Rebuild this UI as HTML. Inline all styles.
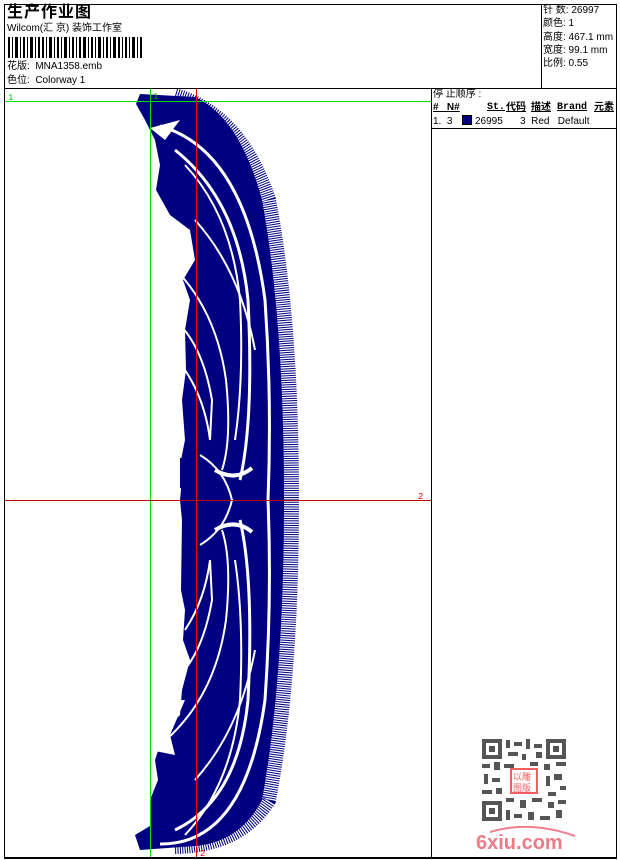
<!DOCTYPE html>
<html><head><meta charset="utf-8"><style>
*{margin:0;padding:0;box-sizing:border-box}
body{width:620px;height:860px;background:#fff;position:relative;overflow:hidden;font-family:"Liberation Sans","Noto Sans CJK SC",sans-serif;color:#000}
.t{position:absolute;font-size:10px;line-height:12px;white-space:nowrap}
.ln{position:absolute;background:#000}
</style></head><body>
<div class="ln" style="left:4px;top:4px;width:613px;height:1px"></div>
<div class="ln" style="left:4px;top:857px;width:613px;height:2px"></div>
<div class="ln" style="left:4px;top:4px;width:1px;height:854px"></div>
<div class="ln" style="left:616px;top:4px;width:1px;height:854px"></div>
<div class="ln" style="left:4px;top:88px;width:613px;height:1px"></div>
<div class="ln" style="left:541px;top:4px;width:1px;height:84px"></div>
<div class="ln" style="left:431px;top:88px;width:1px;height:770px"></div>
<div class="ln" style="left:431px;top:128px;width:186px;height:1px"></div>

<div class="t" style="left:7px;top:3px;font-size:16px;line-height:20px;font-weight:bold;letter-spacing:1px">生产作业图</div>
<div class="t" style="left:7px;top:23px">Wilcom(汇 京) 装饰工作室</div>
<svg style="position:absolute;left:8px;top:37px" width="135" height="21">
<g fill="#000">
<rect x="0" y="0" width="2" height="21"/><rect x="4" y="0" width="1" height="21"/><rect x="7" y="0" width="3" height="21"/><rect x="12" y="0" width="1" height="21"/><rect x="15" y="0" width="2" height="21"/><rect x="19" y="0" width="1" height="21"/><rect x="22" y="0" width="3" height="21"/><rect x="27" y="0" width="1" height="21"/><rect x="30" y="0" width="2" height="21"/><rect x="34" y="0" width="2" height="21"/><rect x="38" y="0" width="1" height="21"/><rect x="41" y="0" width="3" height="21"/><rect x="46" y="0" width="1" height="21"/><rect x="49" y="0" width="2" height="21"/><rect x="53" y="0" width="1" height="21"/><rect x="56" y="0" width="3" height="21"/><rect x="61" y="0" width="1" height="21"/><rect x="64" y="0" width="2" height="21"/><rect x="68" y="0" width="1" height="21"/><rect x="71" y="0" width="2" height="21"/><rect x="75" y="0" width="3" height="21"/><rect x="80" y="0" width="1" height="21"/><rect x="83" y="0" width="2" height="21"/><rect x="87" y="0" width="1" height="21"/><rect x="90" y="0" width="3" height="21"/><rect x="95" y="0" width="1" height="21"/><rect x="98" y="0" width="2" height="21"/><rect x="102" y="0" width="1" height="21"/><rect x="105" y="0" width="3" height="21"/><rect x="110" y="0" width="2" height="21"/><rect x="114" y="0" width="1" height="21"/><rect x="117" y="0" width="2" height="21"/><rect x="121" y="0" width="1" height="21"/><rect x="124" y="0" width="3" height="21"/><rect x="129" y="0" width="1" height="21"/><rect x="132" y="0" width="2" height="21"/>
</g></svg>
<div class="t" style="left:7px;top:61px">花版:&nbsp; MNA1358.emb</div>
<div class="t" style="left:7px;top:75px">色位:&nbsp; Colorway 1</div>

<div class="t" style="left:543px;top:5px">针 数: 26997</div>
<div class="t" style="left:543px;top:18px">颜色: 1</div>
<div class="t" style="left:543px;top:32px">高度: 467.1 mm</div>
<div class="t" style="left:543px;top:45px">宽度: 99.1 mm</div>
<div class="t" style="left:543px;top:58px">比例: 0.55</div>

<div class="t" style="left:433px;top:89px">停 止顺序 :</div>
<div class="t" style="left:433px;top:102px;font-weight:bold;text-decoration:underline">#&nbsp;&nbsp; N#</div>
<div class="t" style="left:487px;top:102px;font-weight:bold;text-decoration:underline;font-family:'Liberation Mono','Noto Sans CJK SC',monospace">St.</div>
<div class="t" style="left:506px;top:102px;font-weight:bold;text-decoration:underline">代码</div>
<div class="t" style="left:531px;top:102px;font-weight:bold;text-decoration:underline">描述</div>
<div class="t" style="left:557px;top:102px;font-weight:bold;text-decoration:underline;font-family:'Liberation Mono',monospace">Brand</div>
<div class="t" style="left:594px;top:102px;font-weight:bold;text-decoration:underline">元素</div>
<div class="t" style="left:433px;top:116px">1.&nbsp; 3</div>
<div style="position:absolute;left:462px;top:115px;width:10px;height:10px;background:#000080;border:1px solid #000"></div>
<div class="t" style="left:475px;top:116px">26995</div>
<div class="t" style="left:520px;top:116px">3&nbsp; Red&nbsp;&nbsp; Default</div>

<svg style="position:absolute;left:0;top:0" width="620" height="860">
<g fill="none" stroke="#000080" stroke-width="16" stroke-dasharray="1 1.3">
<path d="M175,96 Q240,115 268,200 Q291,320 291,500 Q291,680 268,800 Q240,845 175,846"/>
</g>
<g fill="#000080">
<path d="M136,104 L140,94 L195,97 Q240,118 262,200 Q284,320 284,500 Q284,680 262,800 Q240,842 195,846 L140,850 L135,835 L150,826 L150,800 L158,780 L155,760 L165,730 L180,715 L182,690 L190,660 L183,640 L185,610 L181,590 L182,520 L180,500 L181,490 L181,460 L185,440 L182,400 L186,370 L185,330 L190,300 L183,280 L195,260 L190,230 L170,215 L156,190 L160,165 L155,140 L145,120 Z"/>
</g>
<g fill="#fff">
<path d="M150,128 L180,120 L165,140 Z"/>
<path d="M150,250 L175,245 L170,265 L185,300 L150,300 Z"/>
<path d="M150,750 L175,755 L170,735 L185,700 L150,700 Z"/>
</g>
<g fill="none" stroke="#fff" stroke-width="3">
<path d="M160,126 Q245,150 265,300 Q272,400 268,500 Q272,600 265,700 Q245,845 160,844"/>
<path d="M175,150 Q238,200 248,300 Q254,420 240,480"/>
<path d="M175,850 M175,830 Q238,800 248,700 Q254,580 240,520"/>
<path d="M215,470 Q235,482 252,468 M215,530 Q235,518 252,532" stroke-width="4"/>
</g>
<g fill="none" stroke="#fff" stroke-width="2">
<path d="M185,165 Q232,215 240,300 Q244,380 235,440"/>
<path d="M185,835 Q232,785 240,700 Q244,620 235,560"/>
<path d="M160,255 Q215,300 226,380 Q232,440 222,470"/>
<path d="M160,745 Q215,700 226,620 Q232,560 222,530"/>
<path d="M160,310 Q200,330 212,400 L210,440"/>
<path d="M160,690 Q200,670 212,600 L210,560"/>
<path d="M195,220 Q240,270 255,350"/>
<path d="M195,780 Q240,730 255,650"/>
<path d="M185,370 Q205,400 210,440"/>
<path d="M185,630 Q205,600 210,560"/>
<path d="M200,455 Q225,470 232,500 Q225,530 200,545"/>
</g>
<g fill="#fff">
<rect x="168" y="420" width="12" height="40"/>
<rect x="168" y="508" width="12" height="30"/>
</g>
<rect x="180" y="458" width="16" height="30" fill="#000080"/>
<line x1="5" y1="101.5" x2="431" y2="101.5" stroke="#00e000" stroke-width="1"/>
<line x1="150.5" y1="89" x2="150.5" y2="857" stroke="#00e000" stroke-width="1"/>
<line x1="196.5" y1="89" x2="196.5" y2="857" stroke="#f00000" stroke-width="1"/>
<line x1="5" y1="500.5" x2="431" y2="500.5" stroke="#c00000" stroke-width="1"/>
<text x="8" y="100" font-size="9" fill="#00c000" font-family="Liberation Mono,monospace">1</text>
<text x="153" y="99" font-size="9" fill="#00c000" font-family="Liberation Mono,monospace">1</text>
<text x="418" y="499" font-size="9" fill="#e00000" font-family="Liberation Mono,monospace">2</text>
<text x="200" y="856" font-size="9" fill="#e00000" font-family="Liberation Mono,monospace">2</text>
<g fill="#555">
<rect x="482" y="739" width="84" height="82" fill="#fff"/>
<path d="M482,739h20v20h-20zM486,743v12h12v-12z M546,739h20v20h-20zM550,743v12h12v-12z M482,801h20v20h-20zM486,805v12h12v-12z" fill-rule="evenodd"/>
<rect x="489" y="746" width="6" height="6"/><rect x="553" y="746" width="6" height="6"/><rect x="489" y="808" width="6" height="6"/>
<rect x="506" y="740" width="4" height="8"/><rect x="514" y="742" width="8" height="4"/><rect x="526" y="739" width="4" height="10"/><rect x="534" y="744" width="8" height="4"/><rect x="508" y="752" width="10" height="4"/><rect x="522" y="754" width="4" height="6"/><rect x="536" y="752" width="6" height="6"/>
<rect x="482" y="764" width="8" height="4"/><rect x="494" y="762" width="6" height="8"/><rect x="504" y="764" width="10" height="4"/><rect x="530" y="762" width="8" height="4"/><rect x="544" y="764" width="6" height="6"/><rect x="556" y="762" width="10" height="4"/>
<rect x="484" y="774" width="4" height="10"/><rect x="492" y="778" width="8" height="4"/><rect x="546" y="776" width="4" height="10"/><rect x="554" y="774" width="8" height="6"/><rect x="560" y="786" width="6" height="4"/>
<rect x="482" y="790" width="10" height="4"/><rect x="496" y="788" width="6" height="6"/><rect x="548" y="792" width="8" height="4"/>
<rect x="506" y="798" width="8" height="4"/><rect x="520" y="800" width="6" height="8"/><rect x="532" y="798" width="10" height="4"/><rect x="548" y="802" width="6" height="6"/><rect x="558" y="800" width="8" height="4"/>
<rect x="506" y="810" width="4" height="10"/><rect x="514" y="814" width="8" height="4"/><rect x="528" y="812" width="6" height="8"/><rect x="540" y="816" width="10" height="4"/><rect x="556" y="810" width="6" height="8"/>
</g>
<rect x="511" y="769" width="26" height="24" fill="#fff" stroke="#f06060" stroke-width="2"/>
<text x="513" y="780" font-size="9" fill="#f06060" font-family="Noto Sans CJK SC,sans-serif">以雕</text>
<text x="513" y="791" font-size="9" fill="#f06060" font-family="Noto Sans CJK SC,sans-serif">图版</text>
<path d="M490,832 Q530,820 575,836" fill="none" stroke="#f08090" stroke-width="2"/>
<text x="476" y="849" font-size="20" font-weight="bold" fill="#ec7b88" font-family="Liberation Sans,sans-serif">6xiu.com</text>
</svg>
</body></html>
